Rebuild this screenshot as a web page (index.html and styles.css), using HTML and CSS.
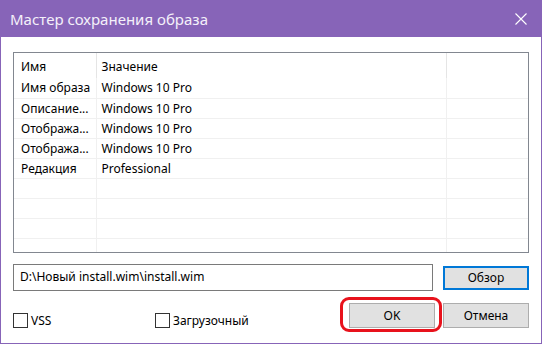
FILE: index.html
```html
<!DOCTYPE html>
<html lang="ru">
<head>
<meta charset="utf-8">
<title>Мастер сохранения образа</title>
<link rel="stylesheet" href="styles.css">
</head>
<body>
<div class="window">
  <div class="titlebar">
    <span class="title">Мастер сохранения образа</span>
    <svg class="close" width="12" height="12" viewBox="0 0 12 12"><path d="M0.5 0.5 L11.5 11.5 M11.5 0.5 L0.5 11.5" stroke="#fff" stroke-width="1.1" fill="none"/></svg>
  </div>
  <div class="content">
    <div class="list">
      <table class="grid">
        <thead>
          <tr><th class="c1">Имя</th><th class="c2">Значение</th><th class="c3"></th></tr>
        </thead>
        <tbody>
          <tr><td class="c1">Имя образа</td><td class="c2">Windows 10 Pro</td><td class="c3"></td></tr>
          <tr><td class="c1">Описание...</td><td class="c2">Windows 10 Pro</td><td class="c3"></td></tr>
          <tr><td class="c1">Отобража...</td><td class="c2">Windows 10 Pro</td><td class="c3"></td></tr>
          <tr><td class="c1">Отобража...</td><td class="c2">Windows 10 Pro</td><td class="c3"></td></tr>
          <tr><td class="c1">Редакция</td><td class="c2">Professional</td><td class="c3"></td></tr>
          <tr><td class="c1"></td><td class="c2"></td><td class="c3"></td></tr>
          <tr><td class="c1"></td><td class="c2"></td><td class="c3"></td></tr>
          <tr><td class="c1"></td><td class="c2"></td><td class="c3"></td></tr>
          <tr class="last"><td class="c1"></td><td class="c2"></td><td class="c3"></td></tr>
        </tbody>
      </table>
    </div>
    <div class="path-row">
      <div class="path">D:\Новый install.wim\install.wim</div>
      <div class="btn btn-focus">Обзор</div>
    </div>
    <div class="bottom-row">
      <label class="check check-vss"><span class="box"></span><span>VSS</span></label>
      <label class="check"><span class="box"></span><span>Загрузочный</span></label>
      <div class="btn btn-ok">OK</div>
      <div class="btn btn-cancel">Отмена</div>
    </div>
  </div>
</div>
</body>
</html>
```
FILE: styles.css
```css
html, body {
  margin: 0;
  padding: 0;
  background: #ffffff;
}
body {
  font-family: "Noto Sans", "Open Sans", sans-serif;
  font-size: 12px;
  color: #000;
}
.window {
  width: 542px;
  height: 344px;
  box-sizing: border-box;
  border: 1px solid #8764b8;
  border-top: none;
  background: #ffffff;
  display: flex;
  flex-direction: column;
}
.titlebar {
  height: 37px;
  margin: 0 -1px;
  background: #8764b8;
  display: flex;
  align-items: center;
  justify-content: space-between;
  padding: 0 15px 0 10px;
  flex: none;
}
.title {
  color: #f4f0fa;
  font-size: 15px;
  line-height: 18px;
  margin-top: 1px;
}
.close {
  display: block;
}
.content {
  padding: 15px 12px 0 12px;
  display: flex;
  flex-direction: column;
}
.list {
  height: 201px;
  box-sizing: border-box;
  border: 1px solid #828790;
  overflow: hidden;
}
.grid {
  border-collapse: collapse;
  width: 100%;
  table-layout: fixed;
}
.grid th, .grid td {
  padding: 0;
  text-align: left;
  font-weight: normal;
  white-space: nowrap;
  overflow: hidden;
}
.grid th {
  height: 25px;
  border-right: 1px solid #e5e5e5;
  vertical-align: middle;
  padding-top: 2px;
  box-sizing: border-box;
}
.grid td {
  height: 20px;
  box-sizing: border-box;
  border-bottom: 1px solid #f0f0f0;
  border-right: 1px solid #f0f0f0;
  vertical-align: middle;
}
.grid .c1 {
  width: 82px;
  padding-left: 7px;
  box-sizing: border-box;
}
.grid .c2 {
  width: 350px;
  padding-left: 5px;
  box-sizing: border-box;
}
.grid .c3 {
  border-right: none;
}
.path-row {
  margin-top: 11px;
  display: flex;
  align-items: center;
}
.path {
  width: 420px;
  height: 27px;
  box-sizing: border-box;
  border: 1px solid #7a7a7a;
  padding-left: 6px;
  line-height: 24px;
}
.btn {
  width: 86px;
  height: 25px;
  box-sizing: border-box;
  background: #e1e1e1;
  border: 1px solid #adadad;
  display: flex;
  align-items: center;
  justify-content: center;
}
.btn-focus {
  margin-left: 10px;
  height: 24px;
  border: 2px solid #0078d7;
}
.bottom-row {
  margin-top: 12px;
  display: flex;
  align-items: flex-start;
}
.check {
  display: flex;
  align-items: center;
  margin-top: 9px;
  height: 17px;
  gap: 3px;
}
.check-vss {
  width: 142px;
}
.box {
  width: 15px;
  height: 15px;
  box-sizing: border-box;
  border: 1px solid #333333;
  background: #fff;
}
.btn-ok {
  margin-left: auto;
  position: relative;
}
.btn-ok::after {
  content: "";
  position: absolute;
  top: -7px;
  bottom: -5px;
  left: -10px;
  right: -8px;
  border: 3px solid #e8121c;
  border-radius: 9px;
}
.btn-cancel {
  margin-left: 8px;
}
```
